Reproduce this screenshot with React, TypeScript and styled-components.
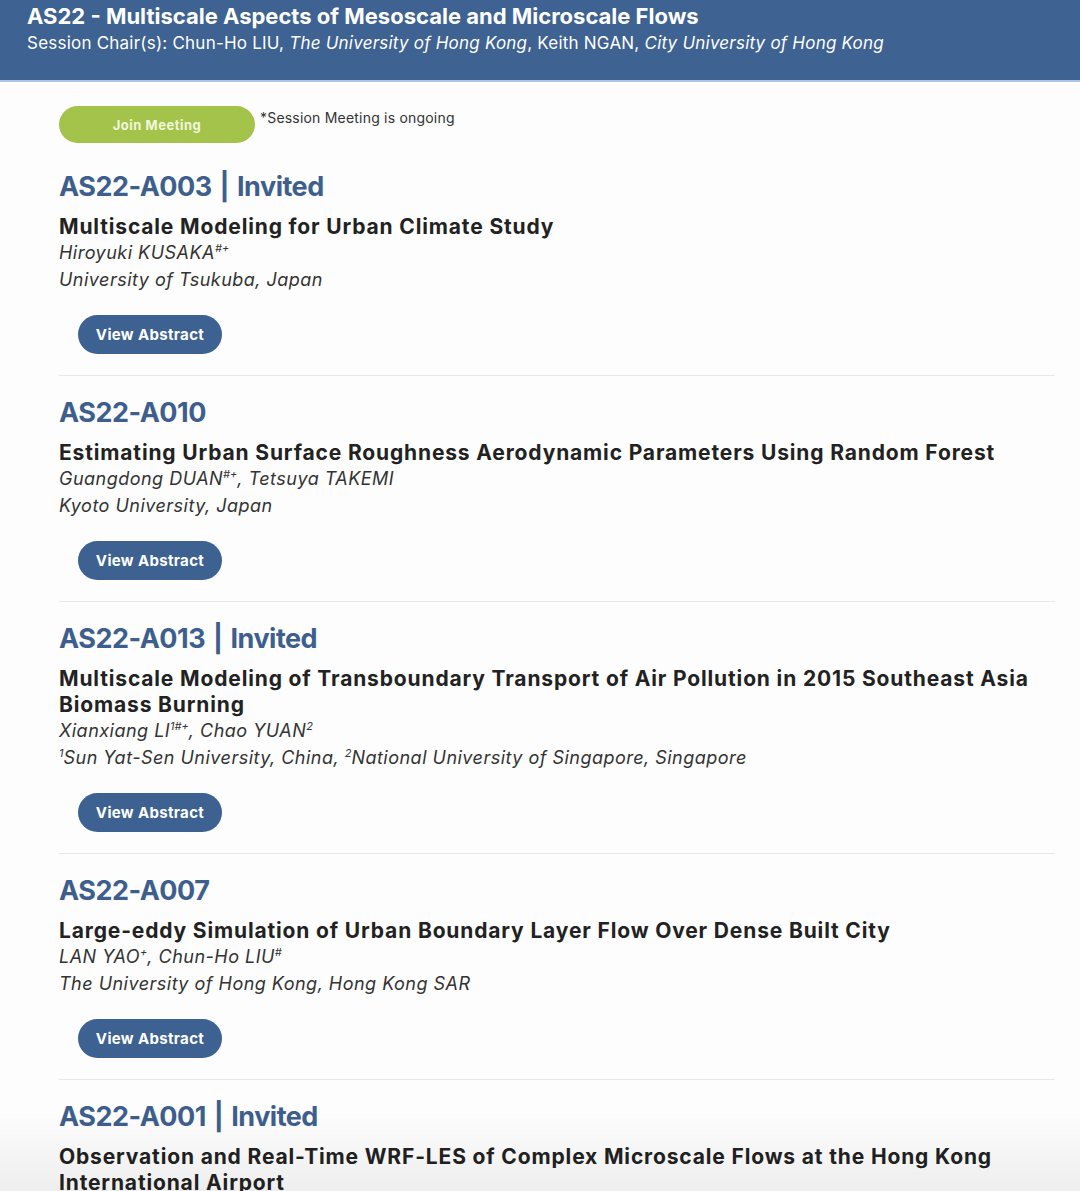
import React from "react";
import styled, { createGlobalStyle } from "styled-components";

const GlobalStyle = createGlobalStyle`
  html, body {
    margin: 0;
    padding: 0;
    background: #fdfdfd;
  }
  body {
    font-family: Inter, "DejaVu Sans", sans-serif;
    color: #222;
  }
  body::after {
    content: "";
    position: fixed;
    left: 0;
    right: 0;
    bottom: 0;
    height: 80px;
    pointer-events: none;
    background: linear-gradient(to bottom, rgba(0, 0, 0, 0), rgba(0, 0, 0, 0.06));
  }
  * { box-sizing: border-box; }
`;

const Header = styled.header`
  background: #3e6291;
  border-bottom: 2px solid #a9c7e5;
  height: 82px;
  padding: 3px 27px 0;
  color: #fff;
  overflow: hidden;
`;

const HeaderTitle = styled.h1`
  margin: 0;
  font-size: 22px;
  line-height: 26px;
  font-weight: 700;
`;

const HeaderSub = styled.div`
  margin-top: 1px;
  font-size: 17px;
  line-height: 26px;
  font-weight: 400;
  letter-spacing: 0.22px;
  em { font-style: italic; }
`;

const Main = styled.main`
  padding: 24px 25px 0 59px;
`;

const JoinRow = styled.div`
  display: flex;
  align-items: flex-start;
  gap: 5px;
  margin-bottom: 7px;
`;

const JoinButton = styled.button`
  width: 196px;
  height: 37px;
  border: none;
  border-radius: 19px;
  background: #a4c34b;
  color: #f1f6dc;
  font-family: inherit;
  font-size: 13px;
  font-weight: 700;
  letter-spacing: 0.5px;
  cursor: pointer;
`;

const Note = styled.span`
  margin-top: 2px;
  font-size: 14px;
  line-height: 20px;
  letter-spacing: 0.2px;
  color: #333;
`;

const Item = styled.section`
  padding: 19px 0 21px;
  border-bottom: 1px solid #e8e8e8;
`;

const Code = styled.h2`
  margin: 0;
  font-size: 27px;
  line-height: 36px;
  font-weight: 700;
  letter-spacing: -0.5px;
  color: #3e5f8e;
`;

const Pipe = styled.span`
  margin: 0 2px;
`;

const Title = styled.h3`
  margin: 9px 0 0;
  font-size: 21px;
  line-height: 26px;
  font-weight: 700;
  letter-spacing: 0.85px;
  color: #222;
`;

const Authors = styled.div<{ $lh: number }>`
  font-size: 18px;
  line-height: ${(p) => p.$lh}px;
  font-style: italic;
  letter-spacing: 0.48px;
  color: #333;
  sup {
    font-size: 11px;
    line-height: 0;
    vertical-align: 7px;
    letter-spacing: 0;
  }
`;

const ViewButton = styled.button`
  display: block;
  margin: 21px 0 0 19px;
  width: 144px;
  height: 39px;
  border: none;
  border-radius: 20px;
  background: #3d6191;
  color: #fff;
  font-family: inherit;
  font-size: 15px;
  font-weight: 700;
  letter-spacing: 0.35px;
  cursor: pointer;
`;

type Paper = {
  id: string;
  invited: boolean;
  title: string;
  authors?: React.ReactNode;
  affil?: React.ReactNode;
};

const papers: Paper[] = [
  {
    id: "AS22-A003",
    invited: true,
    title: "Multiscale Modeling for Urban Climate Study",
    authors: (
      <>
        Hiroyuki KUSAKA<sup>#+</sup>
      </>
    ),
    affil: "University of Tsukuba, Japan",
  },
  {
    id: "AS22-A010",
    invited: false,
    title:
      "Estimating Urban Surface Roughness Aerodynamic Parameters Using Random Forest",
    authors: (
      <>
        Guangdong DUAN<sup>#+</sup>, Tetsuya TAKEMI
      </>
    ),
    affil: "Kyoto University, Japan",
  },
  {
    id: "AS22-A013",
    invited: true,
    title:
      "Multiscale Modeling of Transboundary Transport of Air Pollution in 2015 Southeast Asia Biomass Burning",
    authors: (
      <>
        Xianxiang LI<sup>1#+</sup>, Chao YUAN<sup>2</sup>
      </>
    ),
    affil: (
      <>
        <sup>1</sup>Sun Yat-Sen University, China, <sup>2</sup>National
        University of Singapore, Singapore
      </>
    ),
  },
  {
    id: "AS22-A007",
    invited: false,
    title: "Large-eddy Simulation of Urban Boundary Layer Flow Over Dense Built City",
    authors: (
      <>
        LAN YAO<sup>+</sup>, Chun-Ho LIU<sup>#</sup>
      </>
    ),
    affil: "The University of Hong Kong, Hong Kong SAR",
  },
  {
    id: "AS22-A001",
    invited: true,
    title:
      "Observation and Real-Time WRF-LES of Complex Microscale Flows at the Hong Kong International Airport",
  },
];

export default function App() {
  return (
    <>
      <GlobalStyle />
      <Header>
        <HeaderTitle>AS22 - Multiscale Aspects of Mesoscale and Microscale Flows</HeaderTitle>
        <HeaderSub>
          Session Chair(s): Chun-Ho LIU, <em>The University of Hong Kong</em>, Keith NGAN,{" "}
          <em>City University of Hong Kong</em>
        </HeaderSub>
      </Header>
      <Main>
        <JoinRow>
          <JoinButton>Join Meeting</JoinButton>
          <Note>*Session Meeting is ongoing</Note>
        </JoinRow>
        {papers.map((p) => (
          <Item key={p.id}>
            <Code>
              {p.id}
              {p.invited && (
                <>
                  {" "}
                  <Pipe>|</Pipe> Invited
                </>
              )}
            </Code>
            <Title>{p.title}</Title>
            {p.authors && <Authors $lh={26}>{p.authors}</Authors>}
            {p.affil && <Authors $lh={28}>{p.affil}</Authors>}
            {p.authors && <ViewButton>View Abstract</ViewButton>}
          </Item>
        ))}
      </Main>
    </>
  );
}
